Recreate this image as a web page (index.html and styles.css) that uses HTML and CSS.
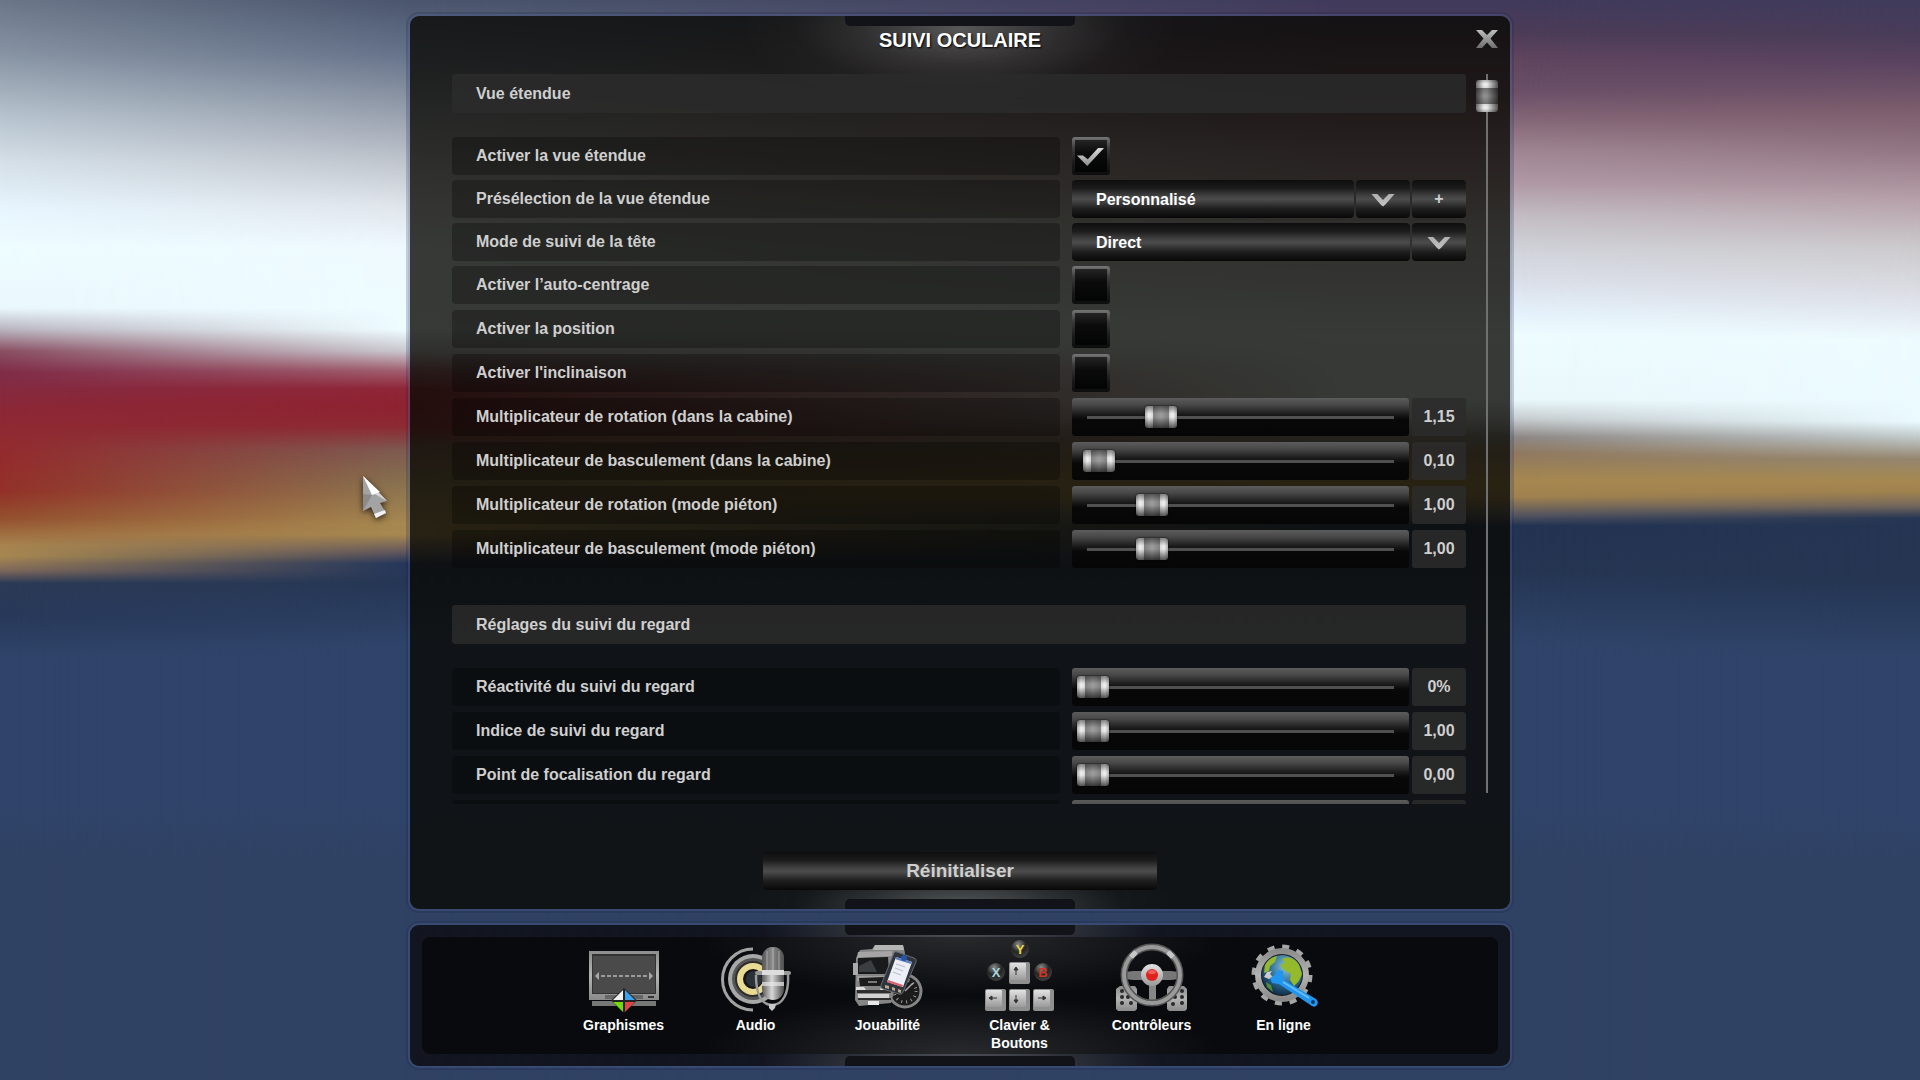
FILE: index.html
```html
<!-- eye-tracking.html -->
<!DOCTYPE html>
<html lang="fr">
<head>
    <meta charset="UTF-8">
    <meta name="viewport" content="width=device-width, initial-scale=1.0">
    <title>Suivi oculaire</title>
    <link rel="stylesheet" href="styles.css">
</head>
<body>
    <div class="backdrop">
        <div class="backdrop-layer layer-left"></div>
        <div class="backdrop-layer layer-mid-left"></div>
        <div class="backdrop-layer layer-mid-right"></div>
        <div class="backdrop-layer layer-right"></div>
    </div>

    <main class="panel">
        <header class="panel-header">
            <h1>SUIVI OCULAIRE</h1>
            <button class="close-button" aria-label="Fermer">
                <svg width="24" height="20" viewBox="0 0 24 20">
                    <defs>
                        <linearGradient id="close-fill" x1="0" y1="0" x2="0" y2="1">
                            <stop offset="0" stop-color="#bdbdbd"/>
                            <stop offset="1" stop-color="#6f6f6f"/>
                        </linearGradient>
                    </defs>
                    <path fill="url(#close-fill)" d="M1 1h6l5 5 5-5h6l-7.500 8.500L23 19h-6l-5-5.500L7 19H1l7.500-9.500z"/>
                </svg>
            </button>
        </header>

        <div class="panel-body">
            <div class="settings">
                <h2>Vue étendue</h2>
                <section class="settings-group">
                    <div class="setting tight">
                        <label for="extended-view">Activer la vue étendue</label>
                        <input type="checkbox" id="extended-view" checked>
                    </div>
                    <div class="setting tight">
                        <label for="preset">Présélection de la vue étendue</label>
                        <div class="combo">
                            <select id="preset"><option>Personnalisé</option></select>
                            <button class="combo-button" aria-label="Ouvrir"><span class="chevron"></span></button>
                            <button class="combo-button">+</button>
                        </div>
                    </div>
                    <div class="setting tight">
                        <label for="head-mode">Mode de suivi de la tête</label>
                        <div class="combo">
                            <select id="head-mode"><option>Direct</option></select>
                            <button class="combo-button" aria-label="Ouvrir"><span class="chevron"></span></button>
                        </div>
                    </div>
                    <div class="setting">
                        <label for="auto-center">Activer l’auto-centrage</label>
                        <input type="checkbox" id="auto-center">
                    </div>
                    <div class="setting">
                        <label for="position">Activer la position</label>
                        <input type="checkbox" id="position">
                    </div>
                    <div class="setting">
                        <label for="roll">Activer l'inclinaison</label>
                        <input type="checkbox" id="roll">
                    </div>
                    <div class="setting">
                        <label for="yaw-cabin">Multiplicateur de rotation (dans la cabine)</label>
                        <div class="slider">
                            <input type="range" id="yaw-cabin" min="0" max="5" step="0.05" value="1.15">
                            <output for="yaw-cabin">1,15</output>
                        </div>
                    </div>
                    <div class="setting">
                        <label for="pitch-cabin">Multiplicateur de basculement (dans la cabine)</label>
                        <div class="slider">
                            <input type="range" id="pitch-cabin" min="0" max="5" step="0.05" value="0.1">
                            <output for="pitch-cabin">0,10</output>
                        </div>
                    </div>
                    <div class="setting">
                        <label for="yaw-walk">Multiplicateur de rotation (mode piéton)</label>
                        <div class="slider">
                            <input type="range" id="yaw-walk" min="0" max="5" step="0.05" value="1">
                            <output for="yaw-walk">1,00</output>
                        </div>
                    </div>
                    <div class="setting">
                        <label for="pitch-walk">Multiplicateur de basculement (mode piéton)</label>
                        <div class="slider">
                            <input type="range" id="pitch-walk" min="0" max="5" step="0.05" value="1">
                            <output for="pitch-walk">1,00</output>
                        </div>
                    </div>
                </section>

                <h2>Réglages du suivi du regard</h2>
                <section class="settings-group">
                    <div class="setting">
                        <label for="gaze-response">Réactivité du suivi du regard</label>
                        <div class="slider">
                            <input type="range" id="gaze-response" min="0" max="100" value="0">
                            <output for="gaze-response">0%</output>
                        </div>
                    </div>
                    <div class="setting">
                        <label for="gaze-index">Indice de suivi du regard</label>
                        <div class="slider">
                            <input type="range" id="gaze-index" min="1" max="5" step="0.05" value="1">
                            <output for="gaze-index">1,00</output>
                        </div>
                    </div>
                    <div class="setting">
                        <label for="gaze-focus">Point de focalisation du regard</label>
                        <div class="slider">
                            <input type="range" id="gaze-focus" min="0" max="1" step="0.05" value="0">
                            <output for="gaze-focus">0,00</output>
                        </div>
                    </div>
                    <div class="setting">
                        <label for="gaze-extra"></label>
                        <div class="slider">
                            <input type="range" id="gaze-extra" min="0" max="1" step="0.05" value="0">
                            <output for="gaze-extra"></output>
                        </div>
                    </div>
                </section>
            </div>
            <div class="scrollbar"><div class="scrollbar-thumb"></div></div>
        </div>

        <button class="reset-button">Réinitialiser</button>
    </main>

    <nav class="dock">
        <div class="dock-inner">
            <a href="#" class="dock-item">
                <svg viewBox="0 0 76 72">
                    <defs>
                        <linearGradient id="metal" x1="0" y1="0" x2="0" y2="1">
                            <stop offset="0" stop-color="#8d8d8d"/>
                            <stop offset="0.5" stop-color="#b4b4b4"/>
                            <stop offset="1" stop-color="#8a8a8a"/>
                        </linearGradient>
                        <linearGradient id="metal-light" x1="0" y1="0" x2="0" y2="1">
                            <stop offset="0" stop-color="#e2e2e2"/>
                            <stop offset="1" stop-color="#9a9a9a"/>
                        </linearGradient>
                        <linearGradient id="metal-side" x1="0" y1="0" x2="1" y2="0">
                            <stop offset="0" stop-color="#5a5a5a"/>
                            <stop offset="0.45" stop-color="#d8d8d8"/>
                            <stop offset="1" stop-color="#4a4a4a"/>
                        </linearGradient>
                    </defs>
                    <rect x="6" y="60" width="64" height="5" fill="#777"/>
                    <rect x="3" y="10" width="70" height="49" fill="url(#metal)"/>
                    <rect x="6" y="13" width="64" height="40" fill="#333"/>
                    <rect x="7" y="15" width="62" height="37" fill="#4a4a4a"/>
                    <rect x="19" y="54" width="38" height="4" fill="#666"/>
                    <rect x="62" y="55" width="6" height="2" fill="#333"/>
                    <path d="M15 35h46" stroke="#b5b5b5" stroke-width="1.500" stroke-dasharray="4 2"/>
                    <path d="M13 31v8l-4-4zM63 31v8l4-4z" fill="#aaa"/>
                    <path d="M38 47l13 12.500L38 72 25 59.500z" fill="#222"/>
                    <path d="M37 49v10H27z" fill="#f2f2f2"/>
                    <path d="M39 49v10h10z" fill="#3ea3ec"/>
                    <path d="M37 61v10L27 61z" fill="#6fdc0a"/>
                    <path d="M39 61v10l10-10z" fill="#e04545"/>
                </svg>
                <span>Graphismes</span>
            </a>
            <a href="#" class="dock-item">
                <svg viewBox="0 0 76 72">
                    <path d="M35 8a30 30 0 0 0 0 61" fill="none" stroke="#a2a2a2" stroke-width="3"/>
                    <circle cx="35" cy="38" r="25" fill="#a8a8a8"/>
                    <circle cx="35" cy="38" r="21" fill="#555"/>
                    <circle cx="35" cy="38" r="18" fill="#2e2e2e"/>
                    <circle cx="35" cy="38" r="13" fill="#161616" stroke="#eadb94" stroke-width="6"/>
                    <circle cx="36" cy="38" r="8" fill="#2b3138"/>
                    <path d="M38 34c0 18 5 30 16 30s17-12 16-30" fill="none" stroke="#9b9b9b" stroke-width="2.500"/>
                    <path d="M51 63h7l-1 4-3 3-3-3z" fill="#c8c8c8"/>
                    <rect x="44" y="6" width="22" height="53" rx="11" fill="url(#metal-side)"/>
                    <path d="M44 30V17a11 11 0 0 1 22 0v13z" fill="#555" opacity="0.600"/>
                    <path d="M49 10v19M55 7v22M61 10v19" stroke="#d0d0d0" opacity="0.300" stroke-width="2"/>
                    <rect x="37" y="30" width="36" height="4" rx="2" fill="#999"/>
                    <rect x="44" y="29" width="22" height="5" fill="#ddd"/>
                    <rect x="44" y="41" width="22" height="4" fill="#e8e8e8" opacity="0.700"/>
                </svg>
                <span>Audio</span>
            </a>
            <a href="#" class="dock-item">
                <svg viewBox="0 0 76 72">
                    <circle cx="55" cy="50" r="16" fill="#1b1b1b" stroke="#858585" stroke-width="3"/>
                    <circle cx="55" cy="50" r="11" fill="none" stroke="#999" stroke-width="3" stroke-dasharray="1 4"/>
                    <path d="M55 50l8-8" stroke="#aaa" stroke-width="1.500"/>
                    <path d="M25 4h28l2 8-14 50-32 3-4-6 1-42 4-8 12-1z" fill="#858585"/>
                    <path d="M25 4h28l1 5H23z" fill="#b5b5b5"/>
                    <path d="M8 11l34-1v5L7 17z" fill="#a5a5a5"/>
                    <path d="M8 17l30-1 1 17H7z" fill="#181a1b"/>
                    <path d="M9 25l12-6 6 12H9z" fill="#3a3e41"/>
                    <path d="M3 22h5v12H3z" fill="#aaa"/>
                    <path d="M7 35h32v5H7z" fill="#9d9d9d"/>
                    <path d="M9 37l26-1 2 9H10z" fill="#1c1c1c"/>
                    <path d="M18 41h9" stroke="#999" stroke-width="1.500"/>
                    <path d="M7 49h34v3H7zM8 57h33v2H8z" fill="#2e2e2e"/>
                    <path d="M6 46h8l2 3H6zM31 46h8v3h-9z" fill="#ddd"/>
                    <path d="M8 53h31v4H8z" fill="#d2d2d2"/>
                    <path d="M18 60h11v4H18z" fill="#e6e6e6"/>
                    <path d="M44 12q1-2 3-1l17 6q3 1 2 4L53 51q-1 3-4 2l-16-5q-3-1-2-4z" fill="#30343c" stroke="#666c74"/>
                    <path d="M46 16l16 5-9 25-16-5z" fill="#eceff5"/>
                    <path d="M46 16l16 5-1 2-16-5z" fill="#5c7fc0"/>
                    <path d="M38 39l15 5-1 2-15-5z" fill="#d9606c"/>
                    <path d="M46 23l9 3M45 27l8 3M43 31l8 3" stroke="#b5bccb"/>
                    <circle cx="54" cy="17" r="3" fill="#2456a8"/>
                    <path d="M35 44l4 1v3l-4-1zM42 46l3 1v3l-3-1zM48 48l3 1v3l-3-1z" fill="#b9a98c"/>
                </svg>
                <span>Jouabilité</span>
            </a>
            <a href="#" class="dock-item">
                <svg viewBox="0 0 76 72">
                    <defs>
                        <radialGradient id="ball" cx="0.400" cy="0.250" r="0.700">
                            <stop offset="0" stop-color="#8a8a8a"/>
                            <stop offset="0.600" stop-color="#252525"/>
                            <stop offset="1" stop-color="#3c3c3c"/>
                        </radialGradient>
                    </defs>
                    <circle cx="38" cy="8" r="9" fill="url(#ball)"/>
                    <circle cx="14" cy="31" r="9" fill="url(#ball)"/>
                    <circle cx="61" cy="31" r="9" fill="url(#ball)"/>
                    <text x="38" y="13" class="pad-letter" fill="#e6d84a">Y</text>
                    <text x="14" y="36" class="pad-letter" fill="#a9d4dc">X</text>
                    <text x="61" y="36" class="pad-letter" fill="#d3341f">B</text>
                    <g fill="#8f8f8f">
                        <rect x="27" y="21" width="21" height="22" rx="2"/>
                        <rect x="3" y="48" width="21" height="22" rx="2"/>
                        <rect x="27" y="48" width="21" height="22" rx="2"/>
                        <rect x="51" y="48" width="21" height="22" rx="2"/>
                    </g>
                    <g fill="url(#metal-light)">
                        <rect x="28" y="22" width="16" height="17" rx="1"/>
                        <rect x="4" y="49" width="16" height="17" rx="1"/>
                        <rect x="28" y="49" width="16" height="17" rx="1"/>
                        <rect x="52" y="49" width="16" height="17" rx="1"/>
                    </g>
                    <path d="M34 34v-6m-2 1h4l-2-3zM34 54v6m-2-1h4l-2 3zM15 57H9m1-2v4l-3-2zM56 57h6m-1-2v4l3-2z" fill="#333" stroke="#333"/>
                </svg>
                <span>Clavier &amp;<br>Boutons</span>
            </a>
            <a href="#" class="dock-item">
                <svg viewBox="0 0 76 72">
                    <path d="M6 45h15l2 3v20l-2 2H4l-2-2V48zM55 45h15l3 3v20l-2 2H55l-2-2V48z" fill="url(#metal)"/>
                    <g fill="#2a2a2a">
                        <circle cx="8" cy="50" r="2"/><circle cx="14" cy="56" r="2"/><circle cx="8" cy="62" r="2"/><circle cx="17" cy="62" r="2"/>
                        <circle cx="68" cy="50" r="2"/><circle cx="61" cy="56" r="2"/><circle cx="68" cy="62" r="2"/><circle cx="59" cy="63" r="2"/>
                        <circle cx="68" cy="56" r="2"/><circle cx="8" cy="56" r="2"/>
                    </g>
                    <path d="M11 31l8-1h38l8 1v7l-8 1H19l-8-1z" fill="#777"/>
                    <path d="M35 40h7v18l4 5H31l4-5z" fill="#868686"/>
                    <circle cx="38" cy="34" r="28" fill="none" stroke="#555" stroke-width="7"/>
                    <circle cx="38" cy="34" r="28" fill="none" stroke="#9a9a9a" stroke-width="4"/>
                    <path d="M17 16l5-5M54 11l5 5" stroke="#c8c8c8" stroke-width="5"/>
                    <circle cx="38" cy="34" r="11" fill="url(#metal-light)"/>
                    <circle cx="38" cy="34" r="6" fill="#e0201c"/>
                    <ellipse cx="38" cy="31" rx="4" ry="2" fill="#ff8a80" opacity="0.600"/>
                </svg>
                <span>Contrôleurs</span>
            </a>
            <a href="#" class="dock-item">
                <svg viewBox="0 0 76 72">
                    <defs>
                        <radialGradient id="globe" cx="0.600" cy="0.300" r="0.700">
                            <stop offset="0" stop-color="#8cc4d8"/>
                            <stop offset="0.600" stop-color="#2c6a94"/>
                            <stop offset="1" stop-color="#12314c"/>
                        </radialGradient>
                    </defs>
                    <circle cx="36" cy="34" r="28" fill="none" stroke="#a6a6a6" stroke-width="5" stroke-dasharray="7 7.660"/>
                    <circle cx="36" cy="34" r="24" fill="#1c1c1c" stroke="url(#metal)" stroke-width="6"/>
                    <circle cx="36" cy="34" r="20" fill="url(#globe)"/>
                    <path d="M36 18c6-4 14 0 17 6l3 9-3 7-5 5-4-6 1-6-7-4-4-5 5-2zM19 24c3-5 7-8 12-9l-2 6-5 4-1 5-5 2z" fill="#94ba2c"/>
                    <path d="M20 41l5 3 2 7-6-5z" fill="#4f8c3a"/>
                    <path d="M18 36l3-5 5-1-2 3 3 3-4 2z" fill="#ccc"/>
                    <path d="M24 37l6-4 1-4 6 1 1 9 32 19q3 3 1 6t-5 1L33 43l-7-1z" fill="#2296ee"/>
                    <path d="M37 41l26 16" stroke="#66bdf9" stroke-width="2"/>
                    <circle cx="67" cy="61" r="2" fill="#0b3c66"/>
                </svg>
                <span>En ligne</span>
            </a>
        </div>
    </nav>

    <svg class="cursor" width="34" height="48" viewBox="0 0 34 48">
        <path d="M3 2l24 25-7 2 6 10-10 5-5-11-8 4z" fill="#a3a3a3"/>
        <path d="M3 2l24 25-14-8z" fill="#d5d5d5"/>
        <path d="M3 2l17 16-8 3z" fill="#fff"/>
        <path d="M3 20l9 1-9 16z" fill="#8b8b8b"/>
        <path d="M14 40l11-4 1 3-10 5z" fill="#f2f2f2"/>
    </svg>
</body>
</html>
```

FILE: styles.css
```css
* {
    box-sizing: border-box;
}

body {
    font-family: "Liberation Sans", Arial, sans-serif;
    font-weight: bold;
    font-size: 16px;
    color: #cfcfcf;
    background-color: #304264;
    margin: 0;
    height: 100vh;
    padding: 16px 0 14px;
    display: flex;
    flex-direction: column;
    align-items: center;
    gap: 16px;
    overflow: hidden;
}

button,
select {
    font-family: inherit;
    font-weight: bold;
    font-size: 16px;
    border: none;
    cursor: pointer;
}

/* Blurred scene behind the menu */
.backdrop,
.backdrop-layer {
    position: absolute;
    inset: 0;
    z-index: -1;
}

.layer-left {
    background: linear-gradient(#6b7689 0%, #8794a3 5%, #b5c1cc 10.5%, #d5e0e8 15%, #e8f6ff 19.5%, #eefdff 23%, #eaf8fd 28.5%, #b9b5bf 30.5%, #8a4f62 32.5%, #802c48 34.5%, #8c2836 38%, #942b2e 42%, #933128 45.5%, #94502f 48%, #a8844e 50.5%, #a78850 51.5%, #80695a 52.8%, #2b3b56 54%, #28395a 57%, #30446a 61%, #30446a 74%, #304264 80%);
}

.layer-mid-left {
    background: linear-gradient(#4a566d 0%, #66738a 5%, #8f98a7 9.5%, #c0c5cd 15%, #dfe4ea 19%, #eef9ff 23%, #eefcff 30.5%, #c9c8cf 32.5%, #a06070 34.3%, #8f2638 36%, #8e2230 37.5%, #8c2a33 39.5%, #7d5a50 41.7%, #86704f 44.5%, #a68850 48.5%, #a68850 49.5%, #665a5c 51%, #25365a 52.2%, #263755 54%, #30446a 60%, #30446a 74%, #304264 80%);
    mask-image: linear-gradient(to right, transparent, #000 21%);
}

.layer-mid-right {
    background: linear-gradient(#403a5c 0%, #4c3c58 3%, #60455f 5.5%, #6b5068 8.5%, #836676 11%, #9f8592 14%, #b09aa4 17%, #c3bdc3 20%, #d2d5dc 23.5%, #dbdfe9 26%, #e5f2fb 29%, #eefcff 31%, #eaf8fb 37%, #c6cccf 38.8%, #8d8784 40.5%, #90795f 42%, #a68850 44.5%, #a0824f 46%, #555560 47.7%, #233352 48.7%, #253653 53%, #2c3f62 57%, #30446a 60%, #30446a 74%, #304264 80%);
    mask-image: linear-gradient(to right, transparent 21%, #000 70%);
}

.layer-right {
    background: linear-gradient(#403b5c 0%, #483c58 3%, #584260 5.5%, #7a5c6c 10%, #937784 14%, #b6a0a9 18.5%, #cccacc 23%, #dfe2ea 28%, #edfbff 31.5%, #eafafe 39%, #c0c8c9 40.5%, #94866f 42.5%, #a68850 44.5%, #a0824f 45.5%, #75685c 46.8%, #253553 48%, #253653 54%, #30446a 61%, #30446a 75%, #304264 80%);
    mask-image: linear-gradient(to right, transparent 79%, #000);
}

/* Panels */
.panel,
.dock {
    position: relative;
    width: 100%;
    max-width: 1100px;
    border-radius: 9px;
    box-shadow: 0 0 0 2px rgba(110, 130, 180, 0.22), 0 0 0 4px rgba(20, 30, 70, 0.2);
}

.panel {
    flex: 1;
    min-height: 0;
    display: flex;
    flex-direction: column;
    background:
        radial-gradient(ellipse 220px 80px at 50% 12px, rgba(255, 255, 255, 0.28), rgba(255, 255, 255, 0.1) 45%, rgba(255, 255, 255, 0.02) 75%, transparent),
        radial-gradient(ellipse 220px 60px at 50% 100%, rgba(255, 255, 255, 0.3), rgba(255, 255, 255, 0.12) 45%, rgba(255, 255, 255, 0.02) 75%, transparent),
        rgba(9, 9, 4, 0.8);
}

/* Small tabs on the panel edges */
.panel::before,
.panel::after,
.dock::before,
.dock::after {
    content: "";
    position: absolute;
    left: 50%;
    width: 230px;
    height: 10px;
    margin-left: -115px;
    background-color: #111318;
}

.panel::before,
.dock::before {
    top: 0;
    border-radius: 0 0 5px 5px;
}

.panel::after,
.dock::after {
    bottom: 0;
    border-radius: 5px 5px 0 0;
}

.panel-header {
    height: 58px;
    display: flex;
    justify-content: center;
    padding-top: 12px;
}

.panel-header h1 {
    margin: 0;
    font-size: 20px;
    line-height: 24px;
    color: #fff;
    text-shadow: 1px 1px 2px #000;
}

.close-button {
    position: absolute;
    top: 13px;
    right: 11px;
    padding: 0;
    height: 20px;
    background: none;
}

.close-button svg {
    display: block;
}

.panel-body {
    flex: 1;
    min-height: 0;
    display: flex;
    gap: 10px;
    padding: 0 12px 0 42px;
}

.settings {
    flex: 1;
    overflow: hidden;
}

.settings h2 {
    margin: 0 0 24px;
    padding: 0 24px;
    font-size: 16px;
    line-height: 39px;
    background-color: rgba(44, 44, 44, 0.8);
    border-radius: 3px;
}

.settings-group {
    margin-bottom: 37px;
}

.setting {
    display: grid;
    grid-template-columns: 1fr 394px;
    gap: 12px;
    height: 38px;
    margin-bottom: 6px;
}

.setting.tight {
    margin-bottom: 5px;
}

.setting label {
    padding: 0 24px;
    line-height: 38px;
    background-color: rgba(0, 0, 0, 0.27);
    border-radius: 4px;
}

/* Tick boxes */
.setting input[type="checkbox"] {
    appearance: none;
    position: relative;
    width: 38px;
    height: 38px;
    margin: 0;
    border: 3px solid transparent;
    border-radius: 3px;
    background:
        linear-gradient(#242424, #0b0b0b 40%, #030404) padding-box,
        linear-gradient(#757575, #3a3a3a 30%, #1a1a1a 70%, #0d0d0d) border-box;
}

.setting input[type="checkbox"]:checked::after {
    content: "";
    position: absolute;
    left: 2px;
    top: 8px;
    width: 27px;
    height: 18px;
    background: linear-gradient(#dcdcdc, #8c8c8c);
    clip-path: polygon(0 42%, 22% 42%, 40% 62%, 78% 0, 100% 0, 38% 100%);
}

/* Drop-downs */
.combo,
.slider {
    display: flex;
    gap: 2px;
}

.combo select,
.combo-button,
.reset-button {
    background: linear-gradient(#0e0e0e, #1c1c1c 22%, #454545 44%, #4b4b4b 52%, #1e1e1e 76%, #080808);
    border-radius: 4px;
}

.combo select {
    appearance: none;
    flex: 1;
    padding: 0 24px;
    color: #fff;
}

.combo-button {
    width: 54px;
    padding: 0;
    color: #d0d0d0;
}

.chevron {
    display: block;
    width: 24px;
    height: 13px;
    margin: 2px auto 0;
    background: linear-gradient(#b0b0b0, #c4c4c4);
    clip-path: polygon(0 0, 24% 0, 50% 50%, 76% 0, 100% 0, 60% 84%, 50% 100%, 40% 84%);
}

/* Sliders */
.slider {
    gap: 3px;
}

.slider input {
    appearance: none;
    flex: 1;
    min-width: 0;
    height: 38px;
    margin: 0;
    padding: 0 5px;
    border-radius: 3px;
    background: linear-gradient(#5c5c5c, #484848 18%, #1c1c1c 42%, #080808 56%, #060607);
}

.slider input::-webkit-slider-runnable-track {
    height: 22px;
    background: linear-gradient(#505050, #505050) center / calc(100% - 20px) 3px no-repeat;
}

.slider input::-webkit-slider-thumb {
    appearance: none;
    width: 32px;
    height: 22px;
    border-radius: 3px;
    background:
        linear-gradient(rgba(0, 0, 0, 0.45), transparent 35%, transparent 50%, rgba(0, 0, 0, 0.65)),
        linear-gradient(to right, #b0b0b0, #f0f0f0 4px, #d8d8d8 8px, #808080 8px, #9c9c9c 16px, #808080 24px, #d8d8d8 24px, #f0f0f0 28px, #b0b0b0);
    box-shadow: 0 0 2px #000;
}

.slider output {
    width: 54px;
    text-align: center;
    line-height: 37px;
    background-color: rgba(44, 44, 44, 0.85);
    border-radius: 3px;
}

/* Scrollbar */
.scrollbar {
    width: 22px;
    margin-bottom: 11px;
    padding-top: 6px;
    background: linear-gradient(#707070, #707070) center / 2px 100% no-repeat;
}

.scrollbar-thumb {
    height: 32px;
    border-radius: 3px;
    background:
        linear-gradient(to right, rgba(0, 0, 0, 0.55), transparent 35%, transparent 50%, rgba(0, 0, 0, 0.65)),
        linear-gradient(#b0b0b0, #f0f0f0 4px, #d8d8d8 8px, #707070 8px, #909090 16px, #707070 24px, #d8d8d8 24px, #f0f0f0 28px, #b0b0b0);
}

.reset-button {
    align-self: center;
    width: 394px;
    height: 38px;
    margin: 48px 0 19px;
    font-size: 19px;
    color: #cfcfcf;
}

/* Bottom dock */
.dock {
    padding: 12px;
    background:
        radial-gradient(ellipse 200px 50px at 50% 0, rgba(255, 255, 255, 0.3), rgba(255, 255, 255, 0.1) 60%, transparent),
        radial-gradient(ellipse 200px 50px at 50% 100%, rgba(255, 255, 255, 0.3), rgba(255, 255, 255, 0.1) 60%, transparent),
        rgba(13, 14, 20, 0.85);
}

.dock-inner {
    height: 117px;
    display: flex;
    justify-content: center;
    padding: 4px 13px 0 0;
    border-radius: 8px;
    background:
        radial-gradient(ellipse 260px 60px at 50% 0, rgba(255, 255, 255, 0.13), transparent),
        radial-gradient(ellipse 260px 60px at 50% 100%, rgba(255, 255, 255, 0.13), transparent),
        #090a0d;
}

.dock-item {
    width: 132px;
    text-align: center;
    font-size: 14px;
    line-height: 18px;
    color: #fff;
    text-decoration: none;
}

.dock-item svg {
    display: block;
    width: 76px;
    height: 72px;
    margin: 0 auto 3px;
    overflow: visible;
}

.pad-letter {
    font-size: 13px;
    text-anchor: middle;
}

.cursor {
    position: absolute;
    left: 360px;
    top: 474px;
    filter: drop-shadow(0 2px 3px rgba(0, 0, 0, 0.7));
}
```
